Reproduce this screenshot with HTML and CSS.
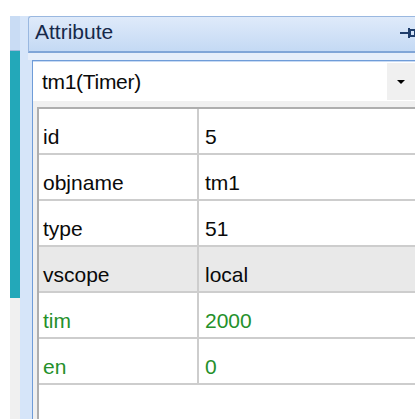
FILE: index.html
```html
<!DOCTYPE html>
<html>
<head>
<meta charset="utf-8">
<title>Attribute</title>
<link rel="stylesheet" href="styles.css">
</head>
<body>
<div class="app">
  <div class="gutter"></div>
  <div class="sidebar">
    <div class="sb-top"></div>
    <div class="sb-teal"></div>
    <div class="sb-rest"></div>
  </div>
  <div class="dockstrip"></div>
  <div class="panel">
    <div class="panel-head">
      <span class="panel-title">Attribute</span>
      <svg class="pin" width="15" height="12" viewBox="0 0 15 12">
        <rect x="0" y="5" width="8" height="2" fill="#1f3d6b"/>
        <rect x="8" y="1" width="2" height="10" fill="#1f3d6b"/>
        <rect x="10" y="3" width="5" height="6" fill="none" stroke="#1f3d6b" stroke-width="2"/>
      </svg>
    </div>
    <div class="head-gap"></div>
    <div class="content">
      <div class="combo">
        <span class="combo-text">tm1(Timer)</span>
        <div class="combo-btn"><span class="arrow"></span></div>
      </div>
      <div class="grid">
        <div class="row"><div class="key">id</div><div class="val">5</div></div>
        <div class="row"><div class="key">objname</div><div class="val">tm1</div></div>
        <div class="row"><div class="key">type</div><div class="val">51</div></div>
        <div class="row row-sel"><div class="key">vscope</div><div class="val">local</div></div>
        <div class="row row-green"><div class="key">tim</div><div class="val">2000</div></div>
        <div class="row row-green"><div class="key">en</div><div class="val">0</div></div>
      </div>
    </div>
  </div>
</div>
</body>
</html>
```
FILE: styles.css
```css
html, body {
  margin: 0;
  padding: 0;
  background: #ffffff;
}

body {
  width: 415px;
  height: 419px;
  overflow: hidden;
  font-family: "Liberation Sans", Arial, sans-serif;
  font-size: 21px;
  color: #0a0a0a;
}

.app {
  display: flex;
  box-sizing: border-box;
  height: 419px;
  padding-top: 16px;
}

.gutter {
  width: 10px;
  flex: none;
  background: #ffffff;
}

/* left tool strip */
.sidebar {
  width: 10px;
  flex: none;
  display: flex;
  flex-direction: column;
}

.sb-top {
  height: 34px;
  background: #c9dcf4;
  border-bottom: 1px solid #9db7d9;
}

.sb-teal {
  height: 247px;
  background: #23a8b9;
}

.sb-rest {
  flex: 1;
  background: #f0f0f0;
}

.dockstrip {
  width: 8px;
  flex: none;
  background: #d6e5f9;
}

/* docked panel */
.panel {
  flex: 1;
  min-width: 0;
  display: flex;
  flex-direction: column;
  background: #d6e5f9;
}

.panel-head {
  box-sizing: border-box;
  height: 37px;
  flex: none;
  display: flex;
  align-items: flex-start;
  justify-content: space-between;
  border: 1px solid #9ab8e0;
  border-right: none;
  border-bottom: 2px solid #80a5d7;
  border-radius: 3px 0 0 0;
  background: linear-gradient(#dfeafa, #c4d9f4);
}

.panel-title {
  padding-left: 6px;
  padding-top: 3px;
  line-height: 24px;
  color: #17294a;
}

.pin {
  margin-top: 10px;
  flex: none;
}

.head-gap {
  height: 7px;
  flex: none;
  background: #e6eefa;
}

.content {
  flex: 1;
  display: flex;
  flex-direction: column;
  margin-left: 4px;
  border-top: 1px solid #6f9cd8;
  border-left: 1px solid #6f9cd8;
  background: #f0f0f0;
}

/* object selector */
.combo {
  box-sizing: border-box;
  height: 40px;
  flex: none;
  display: flex;
  justify-content: space-between;
  background: #ffffff;
  border-top: 1px solid #c7daf4;
}

.combo-text {
  padding-left: 9px;
  padding-top: 8px;
  line-height: 24px;
  letter-spacing: -0.3px;
}

.combo-btn {
  width: 28px;
  margin-top: 1px;
  margin-bottom: 1px;
  background: #f0f0f0;
  display: flex;
  align-items: center;
  justify-content: center;
}

.arrow {
  width: 0;
  height: 0;
  border-left: 4px solid transparent;
  border-right: 4px solid transparent;
  border-top: 4px solid #000000;
}

/* property grid */
.grid {
  flex: 1;
  margin-top: 6px;
  margin-left: 4px;
  background: #ffffff;
  border-top: 2px solid #aeaeae;
  border-left: 2px solid #aeaeae;
}

.row {
  display: flex;
  height: 46px;
  box-sizing: border-box;
  border-bottom: 2px solid #cdcdcd;
}

.key {
  box-sizing: border-box;
  width: 160px;
  flex: none;
  padding: 16px 0 0 4px;
  line-height: 24px;
  border-right: 2px solid #cdcdcd;
}

.val {
  flex: 1;
  padding: 16px 0 0 6px;
  line-height: 24px;
}

.row-sel {
  background: #e9e9e9;
}

.row-green {
  color: #24902a;
}
```
